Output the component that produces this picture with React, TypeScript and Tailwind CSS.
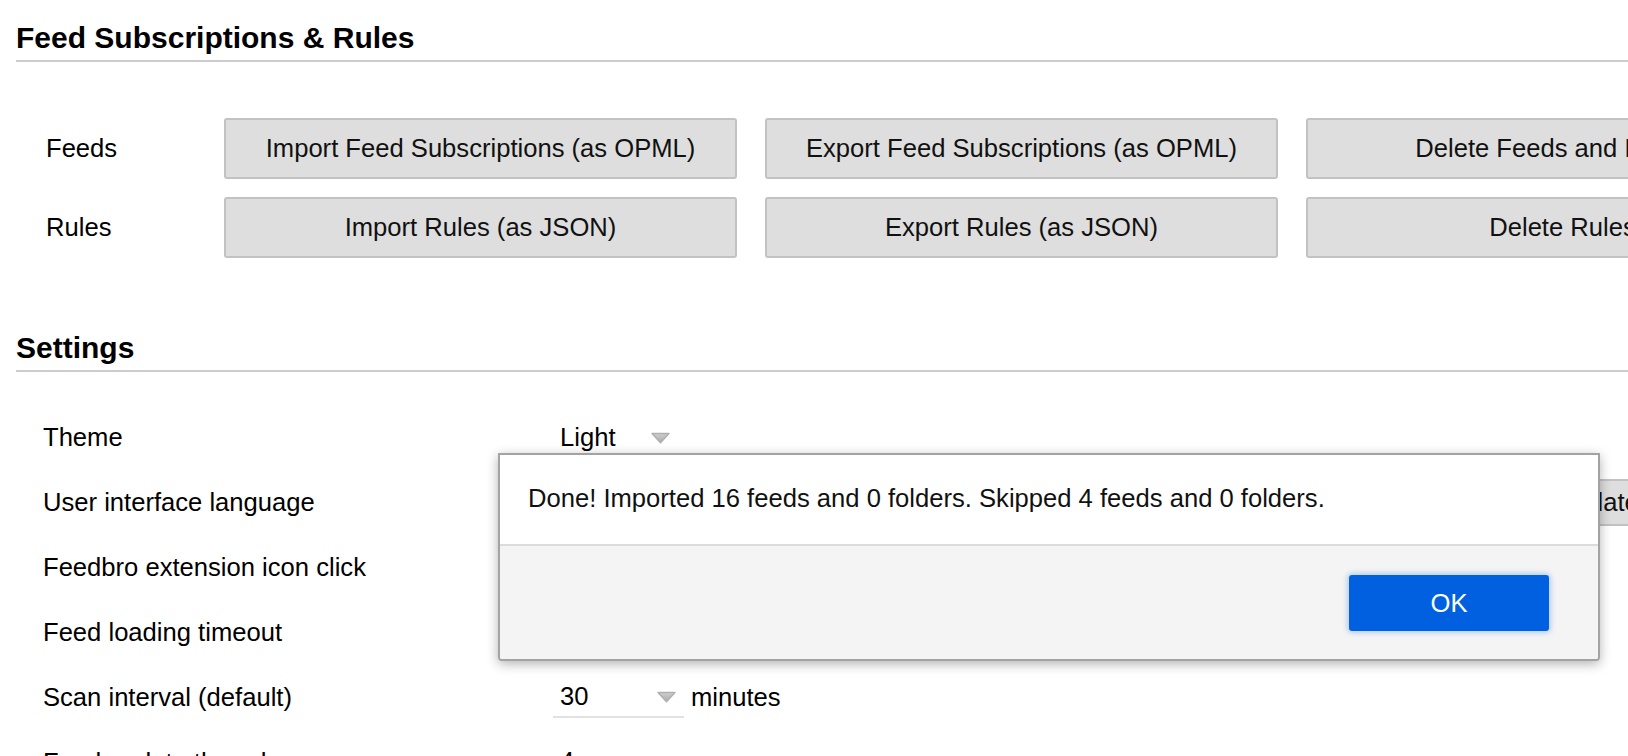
import React from "react";

const Tri = () => (
  <svg width="21" height="12" viewBox="0 0 21 12" className="shrink-0">
    <defs>
      <linearGradient id="tg" x1="0" y1="0" x2="0" y2="1">
        <stop offset="0" stopColor="#cfcfcf" />
        <stop offset="1" stopColor="#a9a9a9" />
      </linearGradient>
    </defs>
    <path d="M2 1.5 H19 L10.5 10.8 Z" fill="url(#tg)" stroke="#b0b0b0" strokeWidth="1.4" strokeLinejoin="round" />
  </svg>
);

const Btn = ({ children }: { children: React.ReactNode }) => (
  <div className="w-[513px] h-[61px] shrink-0 flex items-center justify-center rounded-[3px] border-2 border-[#c2c2c2] bg-[#dedede] text-[#111] whitespace-nowrap overflow-hidden">
    {children}
  </div>
);

const Select = ({ value, w, underline }: { value: string; w: string; underline?: boolean }) => (
  <div className={`${w} h-[40px] flex items-center justify-between pl-[7px] pr-[7px] shrink-0 ${underline ? "border-b-2 border-[#e2e2e2]" : ""}`}>
    <span className="whitespace-nowrap">{value}</span>
    <Tri />
  </div>
);

const Row = ({ label, children }: { label: string; children?: React.ReactNode }) => (
  <div className="h-[65px] flex items-center">
    <div className="w-[510px] shrink-0 whitespace-nowrap">{label}</div>
    <div className="flex items-center">{children}</div>
  </div>
);

export default function App() {
  return (
    <div
      className="relative w-[1628px] h-[756px] overflow-hidden bg-white text-black text-[25.6px] leading-[29px]"
      style={{ fontFamily: '"Liberation Sans", Arial, sans-serif' }}
    >
      <div className="pl-[16px]">
        <div className="mt-[21px] pb-[5px] border-b-2 border-[#cccccc] text-[30px] leading-[34px] font-bold">
          Feed Subscriptions &amp; Rules
        </div>

        <div className="mt-[56px] pl-[30px] flex flex-col gap-[18px]">
          <div className="flex items-center">
            <div className="w-[178px] shrink-0">Feeds</div>
            <div className="flex gap-[28px]">
              <Btn>Import Feed Subscriptions (as OPML)</Btn>
              <Btn>Export Feed Subscriptions (as OPML)</Btn>
              <Btn>Delete Feeds and Folders</Btn>
            </div>
          </div>
          <div className="flex items-center">
            <div className="w-[178px] shrink-0">Rules</div>
            <div className="flex gap-[28px]">
              <Btn>Import Rules (as JSON)</Btn>
              <Btn>Export Rules (as JSON)</Btn>
              <Btn>Delete Rules</Btn>
            </div>
          </div>
        </div>

        <div className="mt-[73px] pb-[5px] border-b-2 border-[#cccccc] text-[30px] leading-[34px] font-bold">
          Settings
        </div>

        <div className="mt-[33px] pl-[27px]">
          <Row label="Theme">
            <Select value="Light" w="w-[125px]" />
          </Row>
          <Row label="User interface language">
            <Select value="English" w="w-[131px]" />
            <div className="ml-[827px] h-[47px] flex items-center pl-[20px] pr-[20px] rounded-[3px] border-2 border-[#c2c2c2] bg-[#dedede] text-[#111] whitespace-nowrap">
              Translate
            </div>
          </Row>
          <Row label="Feedbro extension icon click">
            <Select value="Open Feedbro in a new tab" w="w-[380px]" />
          </Row>
          <Row label="Feed loading timeout">
            <Select value="30" w="w-[131px]" />
            <span className="ml-[7px]">seconds</span>
          </Row>
          <Row label="Scan interval (default)">
            <Select value="30" w="w-[131px]" underline />
            <span className="ml-[7px]">minutes</span>
          </Row>
          <Row label="Feed update threads">
            <Select value="4" w="w-[74px]" underline />
          </Row>
        </div>
      </div>

      <div className="absolute left-[498px] top-[453px] w-[1102px] h-[208px] border-2 border-[#a3a3a3] rounded-b-[4px] bg-white shadow-[0_3px_12px_rgba(0,0,0,0.3)] flex flex-col overflow-hidden">
        <div className="pl-[28px] pt-[29px] pb-[31px] h-[89px] shrink-0 whitespace-nowrap text-[#111]">
          Done! Imported 16 feeds and 0 folders. Skipped 4 feeds and 0 folders.
        </div>
        <div className="flex-1 border-t-2 border-[#dcdcdc] bg-[#f4f4f4] flex justify-end items-start pt-[29px] pr-[49px]">
          <div className="w-[200px] h-[56px] rounded-[3px] bg-[#0060df] text-white flex items-center justify-center shadow-[0_0_5px_2px_rgba(0,96,223,0.25)]">
            OK
          </div>
        </div>
      </div>
    </div>
  );
}
